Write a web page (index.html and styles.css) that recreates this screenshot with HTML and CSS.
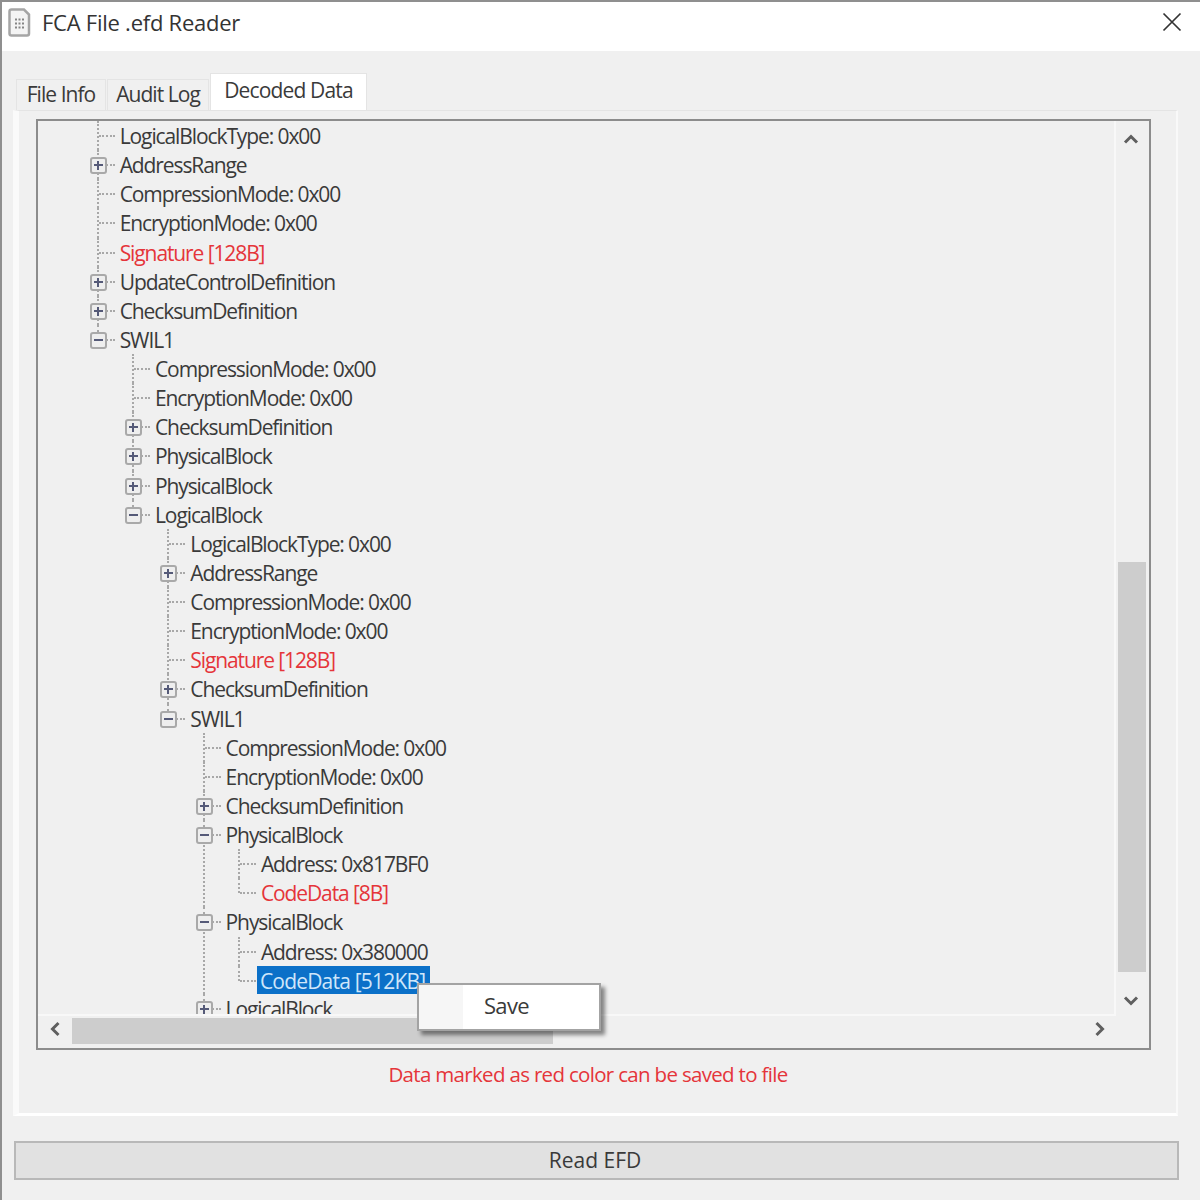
FILE: index.html
```html
<!DOCTYPE html>
<html lang="en">
<head>
    <meta charset="UTF-8">
    <title>FCA File .efd Reader</title>
    <link rel="stylesheet" href="styles.css">
</head>
<body>
<div class="window">
    <div class="titlebar">
        <svg class="app-icon" width="24" height="29" viewBox="0 0 24 29">
            <path d="M2.5 3.5 Q2.5 1.5 4.5 1.5 H17 L22 6.5 V25.5 Q22 27.5 20 27.5 H4.5 Q2.5 27.5 2.5 25.5 Z" fill="#f4f4f4" stroke="#a5a5a5" stroke-width="2.5"/>
            <path d="M8 11.5 H10 M11.5 11.5 H13.5 M15 11.5 H17 M8 15.5 H10 M11.5 15.5 H13.5 M15 15.5 H17 M8 19.5 H10 M11.5 19.5 H13.5 M15 19.5 H17" stroke="#858585" stroke-width="2"/>
        </svg>
        <span class="title">FCA File .efd Reader</span>
        <svg class="close" width="20" height="20" viewBox="0 0 20 20">
            <path d="M1.5 1.5 L18.5 18.5 M18.5 1.5 L1.5 18.5" stroke="#333" stroke-width="1.7" fill="none"/>
        </svg>
    </div>

    <div class="tabs">
        <div class="tab tab-file">File Info</div>
        <div class="tab tab-audit">Audit Log</div>
        <div class="tab active">Decoded Data</div>
    </div>

    <div class="panel">
        <div class="treebox">
            <div class="view">
                <ul class="tree root">
                    <li><span class="node">LogicalBlockType: 0x00</span></li>
                    <li><i class="exp plus"></i><span class="node">AddressRange</span></li>
                    <li><span class="node">CompressionMode: 0x00</span></li>
                    <li><span class="node">EncryptionMode: 0x00</span></li>
                    <li><span class="node red">Signature [128B]</span></li>
                    <li><i class="exp plus"></i><span class="node">UpdateControlDefinition</span></li>
                    <li><i class="exp plus"></i><span class="node">ChecksumDefinition</span></li>
                    <li><i class="exp minus"></i><span class="node">SWIL1</span>
                        <ul class="tree">
                            <li><span class="node">CompressionMode: 0x00</span></li>
                            <li><span class="node">EncryptionMode: 0x00</span></li>
                            <li><i class="exp plus"></i><span class="node">ChecksumDefinition</span></li>
                            <li><i class="exp plus"></i><span class="node">PhysicalBlock</span></li>
                            <li><i class="exp plus"></i><span class="node">PhysicalBlock</span></li>
                            <li><i class="exp minus"></i><span class="node">LogicalBlock</span>
                                <ul class="tree">
                                    <li><span class="node">LogicalBlockType: 0x00</span></li>
                                    <li><i class="exp plus"></i><span class="node">AddressRange</span></li>
                                    <li><span class="node">CompressionMode: 0x00</span></li>
                                    <li><span class="node">EncryptionMode: 0x00</span></li>
                                    <li><span class="node red">Signature [128B]</span></li>
                                    <li><i class="exp plus"></i><span class="node">ChecksumDefinition</span></li>
                                    <li><i class="exp minus"></i><span class="node">SWIL1</span>
                                        <ul class="tree">
                                            <li><span class="node">CompressionMode: 0x00</span></li>
                                            <li><span class="node">EncryptionMode: 0x00</span></li>
                                            <li><i class="exp plus"></i><span class="node">ChecksumDefinition</span></li>
                                            <li><i class="exp minus"></i><span class="node">PhysicalBlock</span>
                                                <ul class="tree">
                                                    <li><span class="node">Address: 0x817BF0</span></li>
                                                    <li><span class="node red">CodeData [8B]</span></li>
                                                </ul>
                                            </li>
                                            <li><i class="exp minus"></i><span class="node">PhysicalBlock</span>
                                                <ul class="tree">
                                                    <li><span class="node">Address: 0x380000</span></li>
                                                    <li><span class="node selected">CodeData [512KB]</span></li>
                                                </ul>
                                            </li>
                                            <li><i class="exp plus"></i><span class="node">LogicalBlock</span></li>
                                        </ul>
                                    </li>
                                </ul>
                            </li>
                        </ul>
                    </li>
                </ul>
            </div>
            <div class="vscroll">
                <svg class="arrow" width="16" height="12" viewBox="0 0 16 12"><path d="M2 9.5 L8 3.5 L14 9.5" fill="none" stroke="#5f5f5f" stroke-width="3"/></svg>
                <div class="vtrack"><div class="vthumb"></div></div>
                <svg class="arrow" width="16" height="12" viewBox="0 0 16 12"><path d="M2 2.5 L8 8.5 L14 2.5" fill="none" stroke="#5f5f5f" stroke-width="3"/></svg>
            </div>
            <div class="hscroll">
                <svg class="arrow" width="12" height="16" viewBox="0 0 12 16"><path d="M9.5 2 L3.5 8 L9.5 14" fill="none" stroke="#5f5f5f" stroke-width="3"/></svg>
                <div class="htrack"><div class="hthumb"></div></div>
                <svg class="arrow" width="12" height="16" viewBox="0 0 12 16"><path d="M2.5 2 L8.5 8 L2.5 14" fill="none" stroke="#5f5f5f" stroke-width="3"/></svg>
            </div>
            <div class="corner"></div>
            <div class="context-menu">
                <div class="menu-gutter"></div>
                <div class="menu-item">Save</div>
            </div>
        </div>
        <div class="note">Data marked as red color can be saved to file</div>
    </div>

    <button type="button" class="read-btn">Read EFD</button>
</div>
</body>
</html>
```

FILE: styles.css
```css
* {
    box-sizing: border-box;
}
body {
    margin: 0;
    font-family: "Open Sans", "Liberation Sans", sans-serif;
    color: #3a3a3a;
    background-color: #f0f0f0;
}
.window {
    height: 1200px;
    border-top: 2px solid #8f8f8f;
    border-left: 2px solid #8f8f8f;
    display: flex;
    flex-direction: column;
    overflow: hidden;
}

/* title bar */
.titlebar {
    flex: none;
    height: 49px;
    background-color: #fff;
    display: flex;
    align-items: center;
    padding: 0 18px 9px 5px;
}
.app-icon {
    flex: none;
}
.title {
    margin-left: 11px;
    font-size: 22px;
    letter-spacing: -0.25px;
    color: #333;
}
.close {
    margin-left: auto;
}

/* tabs */
.tabs {
    flex: none;
    display: flex;
    align-items: flex-end;
    height: 37px;
    margin-top: 22px;
    padding-left: 14px;
}
.tab {
    height: 31px;
    font-size: 21px;
    line-height: 29px;
    letter-spacing: -0.95px;
    text-align: center;
    border: 1px solid #e4e4e4;
    border-bottom: none;
    margin-right: 1px;
}
.tab-file {
    width: 90px;
}
.tab-audit {
    width: 102px;
}
.tab.active {
    width: 157px;
    height: 37px;
    line-height: 33px;
    letter-spacing: -0.85px;
    background-color: #fff;
}

/* panel */
.panel {
    flex: none;
    width: 1165px;
    height: 1006px;
    margin-left: 11px;
    padding: 8px 0 0 17px;
    border-top: 1px solid #e4e4e4;
    border-left: 6px solid #fafafa;
    border-right: 2px solid #f9f9f9;
    border-bottom: 3px solid #fff;
}
.treebox {
    position: relative;
    width: 1115px;
    height: 931px;
    border: 2px solid #8c8c8c;
    display: grid;
    grid-template-columns: 1fr 33px;
    grid-template-rows: 1fr 32px;
}
.view {
    overflow: hidden;
    border-right: 2px solid #f8f8f8;
    border-bottom: 2px solid #f8f8f8;
}

/* tree: each li draws its own dotted connector */
.tree {
    list-style: none;
    margin: 0;
    padding: 0 0 0 35.3px;
}
.root {
    margin-left: 23.4px;
}
.tree li {
    position: relative;
}
.tree li::before {
    content: "";
    position: absolute;
    left: 0;
    top: 0;
    bottom: 0;
    border-left: 2px dotted #a8a8a8;
}
.tree li:last-child::before {
    bottom: auto;
    height: 15px;
}
.tree li::after {
    content: "";
    position: absolute;
    left: 2px;
    top: 14px;
    width: 16px;
    border-top: 2px dotted #a8a8a8;
}
.node {
    display: inline-block;
    height: 29.13px;
    line-height: 31px;
    margin-left: 22px;
    padding: 0 1px;
    font-size: 21px;
    letter-spacing: -1.1px;
    white-space: nowrap;
    vertical-align: top;
}
.red {
    color: #e5353a;
}
.selected {
    width: 173px;
    height: 28.5px;
    margin-left: 19px;
    padding-left: 3px;
    letter-spacing: -0.8px;
    color: #cfe6fa;
    background-color: #0b70c8;
}
.exp {
    position: absolute;
    z-index: 1;
    left: -7px;
    top: 7px;
    width: 17px;
    height: 17px;
    border: 2px solid #a9a9a9;
    border-radius: 3px;
    background-color: #eeeeee;
}
.exp::before,
.plus::after {
    content: "";
    position: absolute;
    background-color: #555a78;
}
.exp::before {
    left: 2px;
    top: 5px;
    width: 9px;
    height: 2px;
}
.plus::after {
    left: 5px;
    top: 2px;
    width: 2px;
    height: 9px;
}

/* scrollbars */
.vscroll,
.hscroll {
    display: flex;
    align-items: center;
}
.vscroll {
    flex-direction: column;
    padding: 12px 4px 9px 0;
}
.vtrack {
    flex: 1;
    width: 100%;
}
.vthumb {
    width: 28px;
    height: 410px;
    margin: 417px 0 0 2px;
    background-color: #cdcdcd;
}
.hscroll {
    align-items: flex-start;
    padding: 2px 10px 0 11px;
}
.hscroll .arrow {
    margin-top: 3px;
}
.htrack {
    flex: 1;
}
.hthumb {
    width: 481px;
    height: 26px;
    margin-left: 11px;
    background-color: #cdcdcd;
}

/* context menu sits over the tree and the scrollbar */
.context-menu {
    position: absolute;
    left: 379px;
    top: 862px;
    width: 184px;
    height: 48px;
    display: flex;
    background-color: #fff;
    border: 2px solid #a3a3a3;
    box-shadow: 4px 4px 4px rgba(0, 0, 0, 0.45);
}
.menu-gutter {
    width: 44px;
    background-color: #f6f6f6;
}
.menu-item {
    padding-left: 21px;
    font-size: 22px;
    line-height: 41px;
    letter-spacing: -0.7px;
}

.note {
    width: 1104px;
    margin-top: 10px;
    text-align: center;
    font-size: 20.5px;
    letter-spacing: -0.68px;
    color: #e5353a;
}
.read-btn {
    flex: none;
    width: 1165px;
    height: 39px;
    margin: 25px 0 0 12px;
    padding: 0 3px 2px 0;
    border: 2px solid #b8b8b8;
    border-radius: 0;
    background-color: #e1e1e1;
    color: #3a3a3a;
    font-family: inherit;
    font-size: 21px;
}
```
